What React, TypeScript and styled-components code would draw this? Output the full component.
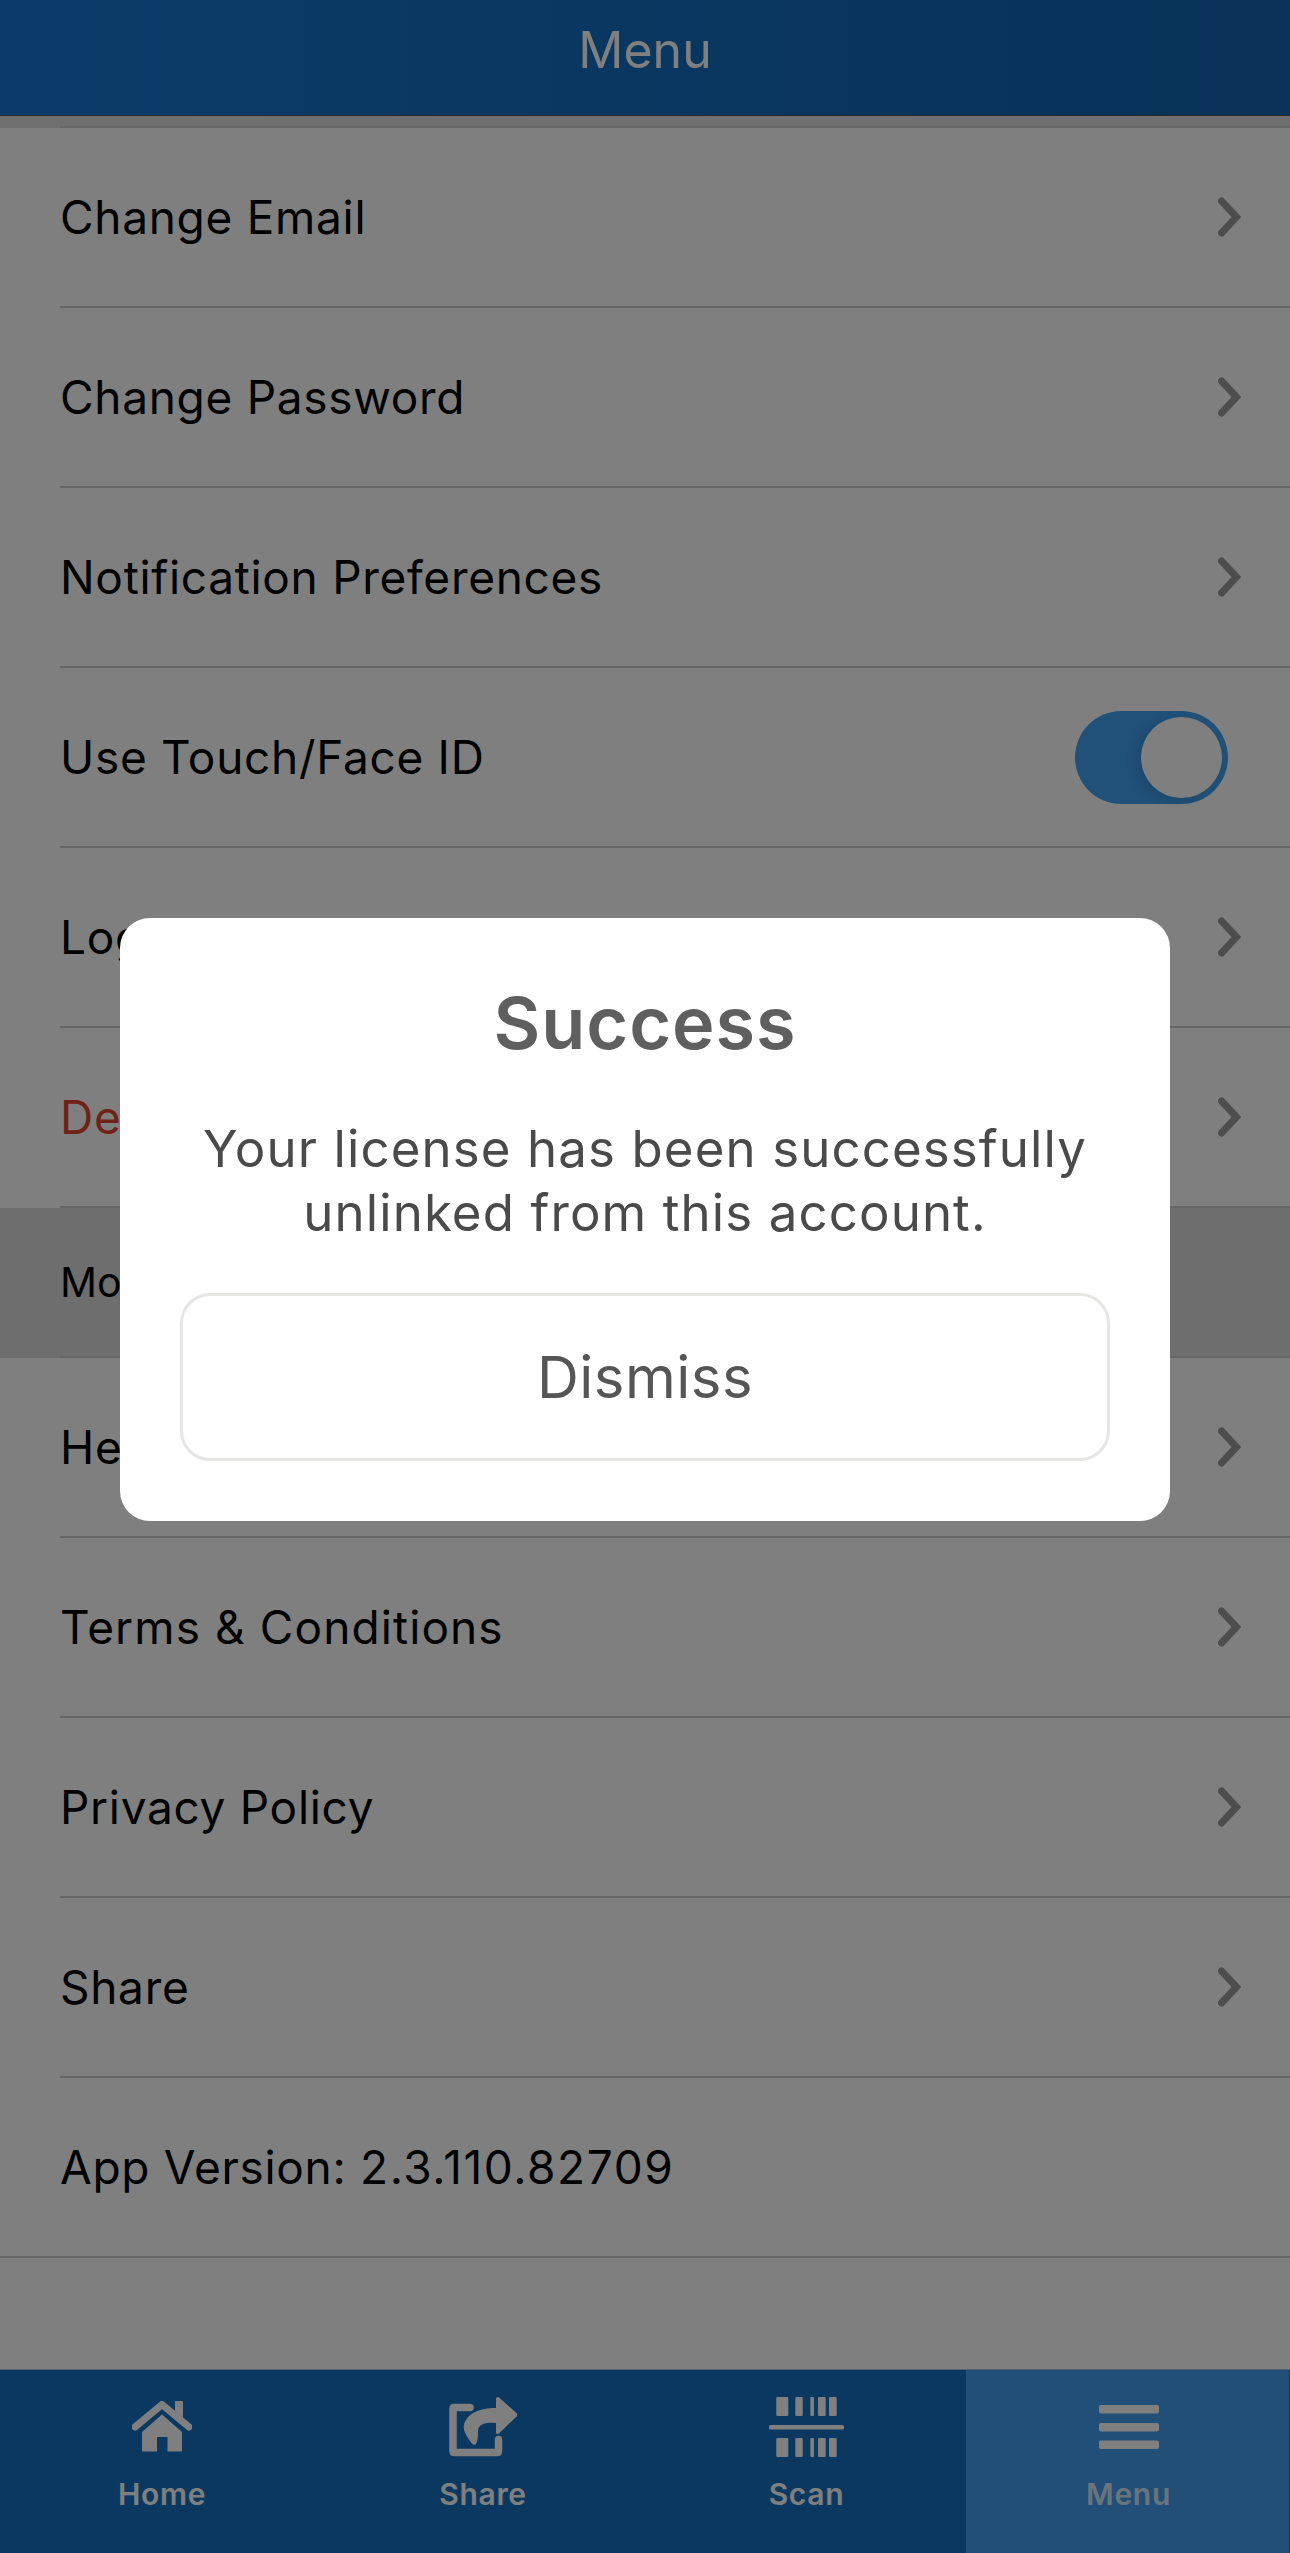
import React from "react";
import styled, { createGlobalStyle } from "styled-components";

const Global = createGlobalStyle`
  html, body { margin: 0; padding: 0; background: #fff; }
  * { box-sizing: border-box; }
`;

const Page = styled.div`
  position: relative;
  width: 1290px;
  height: 2553px;
  overflow: hidden;
  display: flex;
  flex-direction: column;
  background: #fff;
  font-family: Inter, "Liberation Sans", sans-serif;
  color: #000;
`;

const Header = styled.header`
  flex: none;
  height: 116px;
  display: flex;
  align-items: center;
  justify-content: center;
  padding-bottom: 16px;
  background: linear-gradient(90deg, #1678d2 0%, #1064b0 100%);
  border-bottom: 1px solid #555;
  color: #fff;
  font-size: 50px;
  font-weight: 400;
`;

const List = styled.main`
  flex: 1;
  display: flex;
  flex-direction: column;
`;

const TopStrip = styled.div`
  flex: none;
  height: 12px;
  padding-left: 60px;
  background: #e0e0e0;
  display: flex;
`;

const StripLine = styled.div`
  flex: 1;
  border-bottom: 2px solid #ccc;
`;

const Row = styled.div<{ $band?: boolean; $flush?: boolean }>`
  flex: none;
  height: ${(p) => (p.$band ? 150 : 180)}px;
  padding-left: ${(p) => (p.$flush ? 0 : 60)}px;
  background: ${(p) => (p.$band ? "#dcdcdc" : "#fff")};
  display: flex;
`;

const RowInner = styled.div<{ $flush?: boolean }>`
  flex: 1;
  display: flex;
  align-items: center;
  justify-content: space-between;
  padding-left: ${(p) => (p.$flush ? 60 : 0)}px;
  border-bottom: 2px solid #ccc;
`;

const RowLabel = styled.span<{ $danger?: boolean; $small?: boolean; $spacing?: number }>`
  font-size: ${(p) => (p.$small ? 41 : 46)}px;
  letter-spacing: ${(p) => (p.$small ? 0 : p.$spacing ?? 0.7)}px;
  color: ${(p) => (p.$danger ? "#e0452f" : "#000")};
`;

const VersionNumber = styled.span`
  letter-spacing: 1.6px;
`;

const ChevronBox = styled.svg`
  width: 24px;
  height: 40px;
  margin-right: 48px;
  flex: none;
`;

const Toggle = styled.div`
  width: 153px;
  height: 93px;
  margin-right: 62px;
  border-radius: 47px;
  background: #42a0f0;
  display: flex;
  align-items: center;
  justify-content: flex-end;
  padding-right: 6px;
`;

const Knob = styled.div`
  width: 81px;
  height: 81px;
  border-radius: 50%;
  background: #fff;
  box-shadow: -6px 3px 12px rgba(0, 0, 0, 0.1);
`;

const TabBar = styled.nav`
  flex: none;
  height: 184px;
  display: grid;
  grid-template-columns: 322px 322px 322px 324px;
  background: #1670c0;
  border-top: 1px solid #b0c4d8;
`;

const Tab = styled.div<{ $active?: boolean; $nudge?: number }>`
  display: flex;
  flex-direction: column;
  align-items: center;
  padding-left: ${(p) => p.$nudge ?? 0}px;
  background: ${(p) => (p.$active ? "#429ef0" : "transparent")};
  border-right: ${(p) => (p.$active ? "1px solid #1670c0" : "none")};
  color: ${(p) => (p.$active ? "rgba(255,255,255,0.8)" : "#fff")};
`;

const IconSlot = styled.div`
  height: 61px;
  margin-top: 26px;
  width: 100%;
  display: flex;
  align-items: center;
  justify-content: center;
`;

const TabLabel = styled.span`
  margin-top: 20px;
  font-size: 30px;
  line-height: 34px;
  letter-spacing: 0.7px;
  font-weight: 600;
`;

const TabIcon = styled.svg`
  fill: #fff;
  display: block;
`;

const Overlay = styled.div`
  position: absolute;
  inset: 0;
  background: rgba(0, 0, 0, 0.5);
  display: flex;
  justify-content: center;
  align-items: flex-start;
  padding-top: 918px;
`;

const Modal = styled.div`
  width: 1050px;
  height: 603px;
  background: #fff;
  border-radius: 30px;
  padding: 0 60px;
  display: flex;
  flex-direction: column;
  align-items: center;
`;

const Title = styled.h2`
  margin: 62px 0 0;
  font-size: 72px;
  line-height: 85px;
  font-weight: 600;
  letter-spacing: 0.9px;
  color: #5f5f5f;
`;

const Message = styled.p`
  margin: 52px 0 0;
  font-size: 51px;
  line-height: 64px;
  letter-spacing: 1.1px;
  text-align: center;
  color: #4a4a4a;
  font-weight: 400;
`;

const Dismiss = styled.button`
  margin-top: 48px;
  width: 100%;
  height: 168px;
  background: #fff;
  border: 3px solid #e6e6e4;
  border-radius: 30px;
  font-family: inherit;
  font-size: 58px;
  letter-spacing: 0.5px;
  color: #555;
`;

const Chevron = () => (
  <ChevronBox viewBox="0 0 24 40">
    <polyline points="3.500,4 18.500,20 3.500,36" fill="none" stroke="#9a9a9a" strokeWidth="7" strokeLinecap="round" strokeLinejoin="miter" />
  </ChevronBox>
);

const HomeIcon = () => (
  <TabIcon width="60" height="51" viewBox="0 0 60 51">
    <path d="M43 0h7.500a.5.5 0 0 1 .5.5V17L43 10z" />
    <path d="M3 26L30 3.500 57 26" fill="none" stroke="#fff" strokeWidth="7" strokeLinecap="round" strokeLinejoin="miter" />
    <path d="M30 13.500L50 31v18.500a1 1 0 0 1-1 1H35.500V36h-10.500v14.500H11a1 1 0 0 1-1-1V31z" />
  </TabIcon>
);

const ShareIcon = () => (
  <TabIcon width="70" height="61" viewBox="28 12 70 61">
    <path d="M76 14.500Q76.500 12 79 13.500L96.500 29Q98 30.700 96.500 32.500L79 49.500Q76.500 51 76 48.500V39C66 38 58 40 58 47C58 52 58 56 56 60C54 62 52 60 50 57C45 50 43 45 44 41C47 29 60 24 76 24z" />
    <path d="M50 23.500H34Q33 23.500 33 25V67Q33 68.500 34 68.500H77.500Q78.500 68.500 78.500 67V55.500" fill="none" stroke="#fff" strokeWidth="7.500" strokeLinecap="round" />
  </TabIcon>
);

const barXs: [number, number][] = [
  [7.3, 12],
  [26.3, 7.4],
  [41.3, 3.7],
  [49, 7.7],
  [60, 7.7],
];

const ScanIcon = () => (
  <TabIcon width="75" height="60" viewBox="0 0 75 60">
    {barXs.map(([x, w]) => (
      <rect key={`t${x}`} x={x} y="0" width={w} height="19" rx="1" />
    ))}
    <rect x="0" y="28" width="75" height="4.400" rx="1.500" />
    {barXs.map(([x, w]) => (
      <rect key={`b${x}`} x={x} y="41" width={w} height="19" rx="1" />
    ))}
  </TabIcon>
);

const MenuIcon = () => (
  <TabIcon width="60" height="44" viewBox="0 0 60 44">
    <rect x="0" y="0" width="60" height="8.400" rx="2" />
    <rect x="0" y="18" width="60" height="8.400" rx="2" />
    <rect x="0" y="35.600" width="60" height="8.400" rx="2" />
  </TabIcon>
);

const topRows = ["Change Email", "Change Password", "Notification Preferences"];
const bottomRows = ["Help", "Terms & Conditions", "Privacy Policy", "Share"];

export default function App() {
  return (
    <Page>
      <Global />
      <Header>Menu</Header>
      <List>
        <TopStrip>
          <StripLine />
        </TopStrip>
        {topRows.map((t) => (
          <Row key={t}>
            <RowInner>
              <RowLabel>{t}</RowLabel>
              <Chevron />
            </RowInner>
          </Row>
        ))}
        <Row>
          <RowInner>
            <RowLabel>Use Touch/Face ID</RowLabel>
            <Toggle>
              <Knob />
            </Toggle>
          </RowInner>
        </Row>
        <Row>
          <RowInner>
            <RowLabel>Logout</RowLabel>
            <Chevron />
          </RowInner>
        </Row>
        <Row>
          <RowInner>
            <RowLabel $danger>Delete</RowLabel>
            <Chevron />
          </RowInner>
        </Row>
        <Row $band>
          <RowInner>
            <RowLabel $small>More</RowLabel>
          </RowInner>
        </Row>
        {bottomRows.map((t) => (
          <Row key={t}>
            <RowInner>
              <RowLabel $spacing={t.startsWith("Terms") ? 1.1 : undefined}>{t}</RowLabel>
              <Chevron />
            </RowInner>
          </Row>
        ))}
        <Row $flush>
          <RowInner $flush>
            <RowLabel>
              App Version: <VersionNumber>2.3.110.82709</VersionNumber>
            </RowLabel>
          </RowInner>
        </Row>
      </List>
      <TabBar>
        <Tab $nudge={2}>
          <IconSlot>
            <HomeIcon />
          </IconSlot>
          <TabLabel>Home</TabLabel>
        </Tab>
        <Tab>
          <IconSlot>
            <ShareIcon />
          </IconSlot>
          <TabLabel>Share</TabLabel>
        </Tab>
        <Tab $nudge={3}>
          <IconSlot>
            <ScanIcon />
          </IconSlot>
          <TabLabel>Scan</TabLabel>
        </Tab>
        <Tab $active $nudge={2}>
          <IconSlot>
            <MenuIcon />
          </IconSlot>
          <TabLabel>Menu</TabLabel>
        </Tab>
      </TabBar>
      <Overlay>
        <Modal>
          <Title>Success</Title>
          <Message>
            Your license has been successfully
            <br />
            unlinked from this account.
          </Message>
          <Dismiss>Dismiss</Dismiss>
        </Modal>
      </Overlay>
    </Page>
  );
}
